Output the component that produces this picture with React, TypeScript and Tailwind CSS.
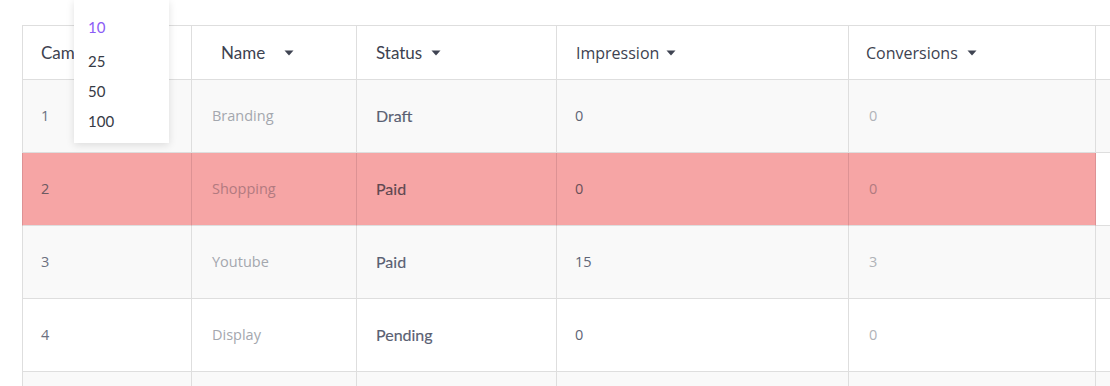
import React from "react";

const Caret = () => (
  <svg width="10" height="6" viewBox="0 0 10 6" className="inline-block">
    <path d="M0.5 0.5 L9.5 0.5 L5 5.5 Z" fill="#3f4452" />
  </svg>
);

type Row = { id: string; name: string; status: string; imp: string; conv: string };
const rows: Row[] = [
  { id: "1", name: "Branding", status: "Draft", imp: "0", conv: "0" },
  { id: "2", name: "Shopping", status: "Paid", imp: "0", conv: "0" },
  { id: "3", name: "Youtube", status: "Paid", imp: "15", conv: "3" },
  { id: "4", name: "Display", status: "Pending", imp: "0", conv: "0" },
  { id: "", name: "", status: "", imp: "", conv: "" },
];

export default function App() {
  return (
    <div className="relative w-[1110px] h-[386px] overflow-hidden bg-white" style={{ fontFamily: "'Open Sans', sans-serif" }}>
      <div className="pt-[25px] pl-[22px]">
        <div className="grid grid-cols-[169px_165px_200px_292px_247px_1fr] border-t border-[#dedede]">
          {/* header */}
          <div className="h-[54px] border-l border-b border-[#dedede] flex items-center pl-[18px] text-[17px] text-[#3d4250]" style={{ fontFamily: "Lato, sans-serif" }}>Campaign</div>
          <div className="h-[54px] border-l border-b border-[#dedede] flex items-center pl-[29px] gap-[19px] text-[17px] text-[#3d4250]" style={{ fontFamily: "Lato, sans-serif" }}>Name <Caret /></div>
          <div className="h-[54px] border-l border-b border-[#dedede] flex items-center pl-[19px] gap-[9px] text-[17px] text-[#3d4250]" style={{ fontFamily: "Lato, sans-serif" }}>Status <Caret /></div>
          <div className="h-[54px] border-l border-b border-[#dedede] flex items-center pl-[19px] gap-[7px] text-[16px] text-[#3d4250]">Impression <Caret /></div>
          <div className="h-[54px] border-l border-b border-[#dedede] flex items-center pl-[17px] gap-[9px] text-[16px] text-[#3d4250]">Conversions <Caret /></div>
          <div className="h-[54px] border-l border-b border-[#dedede]" />

          {rows.map((r, i) => {
            const pink = i === 1;
            const bg = pink ? "bg-[#f6a5a5]" : i % 2 === 0 ? "bg-[#f9f9f9]" : "bg-white";
            const bl = pink ? "border-l-[#dd9294]" : "border-l-[#dedede]";
            const cell = `h-[73px] border-l border-b border-b-[#dedede] ${bl} ${bg} flex items-center text-[14.5px]`;
            return (
              <React.Fragment key={i}>
                <div className={`${cell} pl-[18px] ${pink ? "text-[#6d5a62]" : "text-[#6b7080]"}`}>{r.id}</div>
                <div className={`${cell} pl-[20px] ${pink ? "text-[#b27a80]" : "text-[#a4a7ae]"}`}>{r.name}</div>
                <div className={`${cell} pl-[19px] !text-[16px] ${pink ? "text-[#5e4850]" : "text-[#596072]"}`} style={{ fontFamily: "Lato, sans-serif", WebkitTextStroke: "0.15px currentColor" }}>{r.status}</div>
                <div className={`${cell} pl-[18px] ${pink ? "text-[#6a5058]" : "text-[#5e6474]"}`}>{r.imp}</div>
                <div className={`${cell} pl-[20px] ${pink ? "text-[#b07a80]" : "text-[#b0b3b8]"}`}>{r.conv}</div>
                <div className={`h-[73px] border-l border-b border-[#dedede] ${pink ? "bg-white border-l-[#dd9294]" : i % 2 === 0 ? "bg-[#f9f9f9]" : "bg-white"}`} />
              </React.Fragment>
            );
          })}
        </div>
      </div>

      {/* dropdown */}
      <div className="absolute left-[74px] top-0 w-[95px] h-[143px] bg-white shadow-[0_2px_8px_rgba(0,0,0,0.12)] pt-[12px] pl-[14px] text-[15px]" style={{ fontFamily: "Lato, sans-serif" }}>
        <div className="h-[30px] flex items-center text-[#8b5cf6] mb-[4px]">10</div>
        <div className="h-[30px] flex items-center text-[#363a45]">25</div>
        <div className="h-[30px] flex items-center text-[#363a45]">50</div>
        <div className="h-[30px] flex items-center text-[#363a45]">100</div>
      </div>
    </div>
  );
}
